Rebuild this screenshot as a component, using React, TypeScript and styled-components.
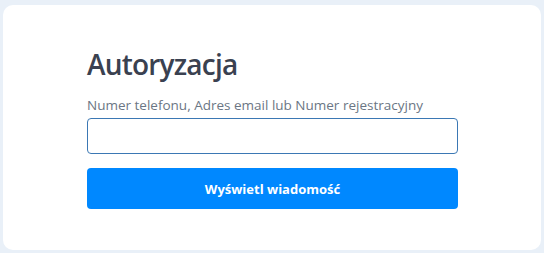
import React from "react";
import styled, { createGlobalStyle } from "styled-components";

const Global = createGlobalStyle`
  html, body { margin: 0; padding: 0; background: #e9f0f8; }
  body { font-family: "Open Sans", "Noto Sans", sans-serif; }
  * { box-sizing: border-box; }
`;

const Page = styled.div`
  padding: 5px 3px 3px 3px;
  height: 253px;
`;

const Card = styled.div`
  background: #ffffff;
  border-radius: 10px;
  height: 245px;
  padding: 41px 83px 0 84px;
  display: flex;
  flex-direction: column;
`;

const Title = styled.h1`
  margin: 0;
  font-size: 28px;
  line-height: 36px;
  font-weight: 600;
  color: #3a4150;
  letter-spacing: -0.8px;
`;

const Label = styled.label`
  margin-top: 14px;
  font-size: 13.5px;
  line-height: 18px;
  color: #6b7684;
`;

const Input = styled.input`
  margin-top: 4px;
  height: 36px;
  width: 100%;
  border: 1px solid #3b78b4;
  border-radius: 4px;
  background: #fff;
  outline: none;
`;

const Button = styled.button`
  margin-top: 14px;
  height: 41px;
  width: 100%;
  border: none;
  border-radius: 4px;
  background: #0088ff;
  color: #ffffff;
  font-family: "Open Sans", "Noto Sans", sans-serif;
  font-size: 13px;
  font-weight: 700;
`;

export default function App() {
  return (
    <>
      <Global />
      <Page>
        <Card>
          <Title>Autoryzacja</Title>
          <Label>Numer telefonu, Adres email lub Numer rejestracyjny</Label>
          <Input type="text" />
          <Button>Wyświetl wiadomość</Button>
        </Card>
      </Page>
    </>
  );
}
